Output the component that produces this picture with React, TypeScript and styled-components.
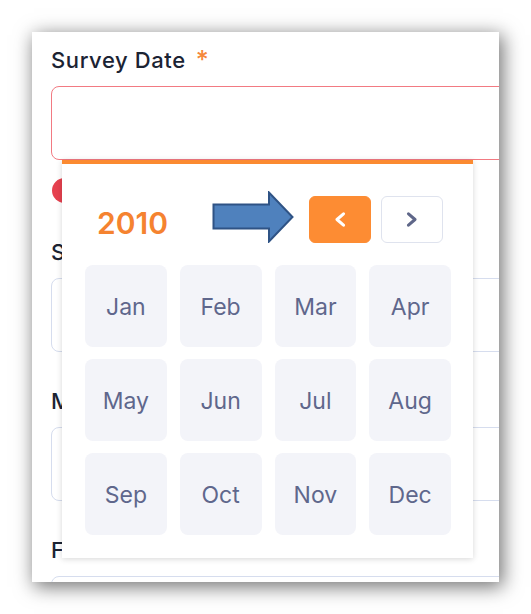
import React from "react";
import styled, { createGlobalStyle } from "styled-components";

const GlobalStyle = createGlobalStyle`
  html, body { margin: 0; padding: 0; background: #ffffff; }
  body { font-family: Inter, "Noto Sans", Arial, sans-serif; }
  * { box-sizing: border-box; }
`;

const Stage = styled.div`
  width: 531px;
  height: 614px;
  padding: 32px 0 0 32px;
  overflow: hidden;
`;

const Card = styled.div`
  position: relative;
  width: 467px;
  height: 550px;
  background: #ffffff;
  overflow: hidden;
  box-shadow: 3px 4px 18px 1px rgba(0, 0, 0, 0.55);
  padding: 14px 0 0 19px;
`;

const Form = styled.div`
  display: flex;
  flex-direction: column;
  gap: 35px;
  width: 520px;
`;

const Field = styled.div`
  display: flex;
  flex-direction: column;
`;

const Label = styled.div`
  font-size: 22px;
  line-height: 28px;
  font-weight: 500;
  color: #1b2333;
  margin-bottom: 12px;
  white-space: nowrap;
  letter-spacing: 0.6px;
`;

const Req = styled.span`
  color: #f5883a;
  margin-left: 10px;
  font-size: 25px;
  font-weight: 500;
  vertical-align: top;
`;

const Input = styled.div<{ $error?: boolean }>`
  height: 74px;
  border-radius: 8px;
  border: ${(p) => (p.$error ? "1.5px solid #f27a82" : "1.5px solid #d6ddee")};
  background: #ffffff;
`;

const ErrorRow = styled.div`
  display: flex;
  align-items: center;
  gap: 8px;
  margin-top: 18px;
  height: 25px;
  font-size: 15px;
  color: #e5404d;
`;

const ErrorDot = styled.span`
  width: 25px;
  height: 25px;
  border-radius: 50%;
  background: #e6414f;
  margin-left: 1px;
`;

const Popup = styled.div`
  position: absolute;
  left: 30px;
  top: 128px;
  width: 411px;
  height: 398px;
  background: #ffffff;
  border-top: 4px solid #fb8a31;
  box-shadow: 0 1px 6px rgba(0, 0, 0, 0.16);
  padding: 32px 22px 22px 23px;
  display: flex;
  flex-direction: column;
  gap: 22px;
`;

const Header = styled.div`
  position: relative;
  height: 47px;
  display: flex;
  align-items: center;
  justify-content: space-between;
  padding: 0 8px 0 12px;
`;

const Year = styled.div`
  font-size: 30px;
  font-weight: 600;
  color: #f58330;
  padding-top: 6px;
`;

const Nav = styled.div`
  display: flex;
  gap: 10px;
`;

const NavButton = styled.button<{ $active?: boolean }>`
  width: 62px;
  height: 47px;
  border-radius: 6px;
  border: ${(p) => (p.$active ? "1.5px solid #fd8c33" : "1.5px solid #dfe3ee")};
  background: ${(p) => (p.$active ? "#fd8c33" : "#ffffff")};
  color: ${(p) => (p.$active ? "#ffffff" : "#5f6789")};
  display: flex;
  align-items: center;
  justify-content: center;
  padding: 0;
`;

const Pointer = styled.svg`
  position: absolute;
  left: 127px;
  top: -5px;
`;

const Grid = styled.div`
  display: grid;
  grid-template-columns: repeat(4, 1fr);
  grid-auto-rows: 82px;
  column-gap: 13px;
  row-gap: 12px;
`;

const Month = styled.div`
  background: #f3f4f9;
  border-radius: 8px;
  display: flex;
  align-items: center;
  justify-content: center;
  font-size: 23px;
  font-weight: 400;
  color: #5f678c;
  padding-top: 2px;
`;

const Chevron = ({ dir }: { dir: "left" | "right" }) => (
  <svg width="12" height="15" viewBox="0 0 12 15">
    <polyline
      points={dir === "left" ? "9.5,1.8 3,7.5 9.5,13.2" : "2.5,1.8 9,7.5 2.5,13.2"}
      fill="none"
      stroke="currentColor"
      strokeWidth="3"
      strokeLinecap="round"
      strokeLinejoin="round"
    />
  </svg>
);

const months = ["Jan", "Feb", "Mar", "Apr", "May", "Jun", "Jul", "Aug", "Sep", "Oct", "Nov", "Dec"];

export default function App() {
  return (
    <>
      <GlobalStyle />
      <Stage>
        <Card>
          <Form>
            <Field>
              <Label>
                Survey Date<Req>*</Req>
              </Label>
              <Input $error />
              <ErrorRow>
                <ErrorDot />
                Survey Date is required
              </ErrorRow>
            </Field>
            <Field>
              <Label>Surveyor Name</Label>
              <Input />
            </Field>
            <Field>
              <Label>Mobile Number</Label>
              <Input />
            </Field>
            <Field>
              <Label>Full Address</Label>
              <Input />
            </Field>
          </Form>
          <Popup>
            <Header>
              <Year>2010</Year>
              <Pointer width="82" height="52" viewBox="0 0 82 52">
                <polygon
                  points="1.5,13.5 57,13.5 57,1.5 80.5,26 57,50.5 57,37.5 1.5,37.5"
                  fill="#4f81bd"
                  stroke="#2f5385"
                  strokeWidth="2"
                  strokeLinejoin="miter"
                />
              </Pointer>
              <Nav>
                <NavButton $active>
                  <Chevron dir="left" />
                </NavButton>
                <NavButton>
                  <Chevron dir="right" />
                </NavButton>
              </Nav>
            </Header>
            <Grid>
              {months.map((m) => (
                <Month key={m}>{m}</Month>
              ))}
            </Grid>
          </Popup>
        </Card>
      </Stage>
    </>
  );
}
